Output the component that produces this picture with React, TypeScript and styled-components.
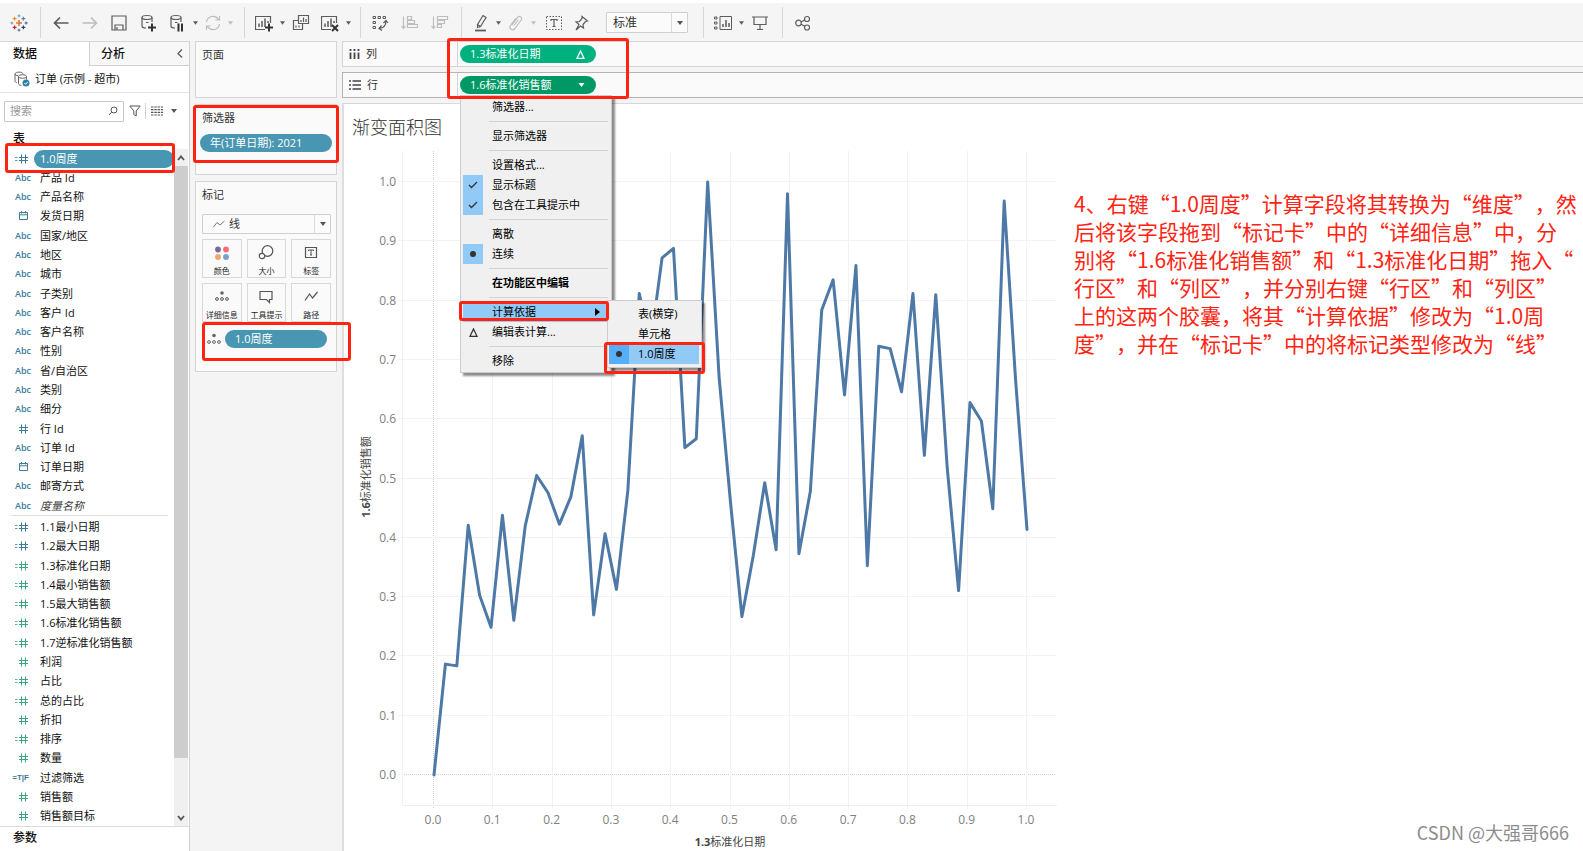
import React from "react";
import styled, { createGlobalStyle, css } from "styled-components";

const SANS = `"Open Sans", "Noto Sans CJK SC", sans-serif`;
const CJK = `"Noto Sans CJK SC", sans-serif`;
const BLUE = "#4996b2";
const DIM = "#3b7c9c";
const MEASURE = "#3ba57c";
const RED = "#ff2412";

const Global = createGlobalStyle`
  *, *::before, *::after { box-sizing: border-box; }
  body { margin: 0; background: #fff; font-family: ${SANS}; font-size: 11px; line-height: 16px; color: #333; }
  button, input, select { font: inherit; color: inherit; margin: 0; padding: 0; }
  button { background: none; border: 0; }
  ul { list-style: none; margin: 0; padding: 0; }
  h1, h2, p { margin: 0; font-size: inherit; font-weight: inherit; }
`;

const Page = styled.div`
  display: flex;
  flex-direction: column;
  min-height: 100vh;
  padding-top: 3px;
`;

/* ---------- toolbar ---------- */

const Toolbar = styled.header`
  display: flex;
  height: 38px;
  padding: 4px 0 3px;
  background: #f5f5f5;
`;

const ToolGroup = styled.div<{ $pad?: number; $width?: number }>`
  display: flex;
  align-items: center;
  flex: none;
  width: ${(p) => (p.$width ? `${p.$width}px` : "auto")};
  padding-left: ${(p) => p.$pad ?? 4}px;
  & + & { border-left: 1px solid #d6d6d6; }
`;

const ToolButton = styled.button<{ $w?: number; $off?: boolean }>`
  display: flex;
  flex: none;
  align-items: center;
  justify-content: center;
  width: ${(p) => p.$w ?? 29}px;
  height: 24px;
  color: ${(p) => (p.$off ? "#bdbdbd" : "#5c5c5c")};
`;

const SizeSelect = styled.div`
  position: relative;
  display: flex;
  width: 82px;
  height: 21px;
  margin-left: 15px;
  font-size: 12px;
`;

const Select = styled.select<{ $indent: number }>`
  appearance: none;
  width: 100%;
  padding: 0 18px 0 ${(p) => p.$indent}px;
  border: 1px solid #cfcfcf;
  border-radius: 1px;
  background: #fbfbfb;
`;

const SelectArrow = styled.span`
  position: absolute;
  right: 0;
  top: 0;
  bottom: 0;
  display: flex;
  align-items: center;
  justify-content: center;
  width: 17px;
  border-left: 1px solid #d9d9d9;
  color: #555;
  pointer-events: none;
`;

const Glyph = ({ s = 18, children }: { s?: number; children: React.ReactNode }) => (
  <svg width={s} height={s} viewBox={`0 0 ${s} ${s}`} fill="none" stroke="currentColor" strokeWidth="1.2" aria-hidden="true">
    {children}
  </svg>
);

const Down = ({ w = 5 }: { w?: number }) => (
  <svg width={w} height="4" viewBox="0 0 6 4" aria-hidden="true">
    <path d="M0 0h6L3 4z" fill="currentColor" />
  </svg>
);

const Caret = ({ off, label }: { off?: boolean; label: string }) => (
  <ToolButton $w={8} $off={off} aria-label={label}>
    <Down w={5} />
  </ToolButton>
);

const plus = (x: number, y: number, r: number, color: string, w = 1.2) => (
  <path key={`${x}-${y}`} d={`M${x - r} ${y}h${2 * r}M${x} ${y - r}v${2 * r}`} stroke={color} strokeWidth={w} />
);

const Logo = () => (
  <Glyph>
    {plus(9, 9, 3, "#e8762b", 1.6)}
    {plus(4.6, 4.6, 1.9, "#eb9129")}
    {plus(13.4, 4.6, 1.9, "#59879b")}
    {plus(4.6, 13.4, 1.9, "#c72037")}
    {plus(13.4, 13.4, 1.9, "#1f457e")}
    {plus(9, 1.9, 1.5, "#5b9fb8", 1)}
    {plus(9, 16.1, 1.5, "#5b6591", 1)}
    {plus(1.9, 9, 1.5, "#7199a6", 1)}
    {plus(16.1, 9, 1.5, "#3d5f9a", 1)}
  </Glyph>
);

const Database = () => (
  <>
    <ellipse cx="8" cy="3.5" rx="5" ry="2" />
    <path d="M3 3.500v8.500c0 1.200 1.500 2 4 2M13 3.500v4.500M9.500 8.500H7" />
  </>
);

const ChartBox = () => (
  <>
    <path d="M15.500 9V2.500h-15v13H10" />
    <path d="M4 13V9.500M7 13V7M10 13V4.500M13 9V7" strokeWidth="1.500" />
  </>
);

const Bars = ({ desc }: { desc?: boolean }) => (
  <>
    <path d="M2.500 2.500v12M.5 12l2 2.500 2-2.500" />
    {desc ? (
      <path d="M6.500 2.500h10v3h-10zM6.500 6.500h7v3h-7zM6.500 10.500h4v3h-4z" />
    ) : (
      <path d="M6.500 2.500h4v3h-4zM6.500 6.500h7v3h-7zM6.500 10.500h10v3h-10z" />
    )}
  </>
);

const AppToolbar = () => (
  <Toolbar>
    <ToolGroup $width={40}>
      <ToolButton aria-label="开始"><Logo /></ToolButton>
    </ToolGroup>
    <ToolGroup $width={204} $pad={5}>
      <ToolButton aria-label="撤消">
        <Glyph><path d="M16.500 9H2.500M8 3.500L2.500 9 8 14.500" strokeWidth="1.700" /></Glyph>
      </ToolButton>
      <ToolButton $off aria-label="重做">
        <Glyph><path d="M1.500 9h14M10 3.500L15.500 9 10 14.500" strokeWidth="1.700" /></Glyph>
      </ToolButton>
      <ToolButton aria-label="保存">
        <Glyph><path d="M2 2h14v14H2zM5 16v-5h8v5M7 13v3" /></Glyph>
      </ToolButton>
      <ToolButton aria-label="新建数据源">
        <Glyph><Database /><path d="M9 13.500h8M13 9.500v8" stroke="#333" strokeWidth="2" /></Glyph>
      </ToolButton>
      <ToolButton aria-label="暂停自动更新">
        <Glyph><Database /><path d="M10.500 9.500v8M14 9.500v8" stroke="#333" strokeWidth="2" /></Glyph>
      </ToolButton>
      <Caret label="自动更新选项" />
      <ToolButton $w={27} $off aria-label="运行更新">
        <Glyph>
          <path d="M2.500 8A6.500 6.500 0 0 1 14.500 5.500M15.500 10A6.500 6.500 0 0 1 3.500 12.500M15.500 2v4h-4M2.500 16v-4h4" />
        </Glyph>
      </ToolButton>
      <Caret off label="更新选项" />
    </ToolGroup>
    <ToolGroup $width={116}>
      <ToolButton aria-label="新建工作表">
        <Glyph><ChartBox /><path d="M10 13.500h8M14 9.500v8" stroke="#333" strokeWidth="2" /></Glyph>
      </ToolButton>
      <Caret label="新建选项" />
      <ToolButton aria-label="复制工作表">
        <Glyph>
          <path d="M6.500 1.500h10v8h-10zM9 8V6M11.500 8V3.500M14 8V5M6.500 6.500h-5v9h9v-6M4 13.500v-2M7 13.500v-2" />
        </Glyph>
      </ToolButton>
      <ToolButton aria-label="清除工作表">
        <Glyph><ChartBox /><path d="M11 11l6 6M17 11l-6 6" stroke="#333" strokeWidth="2" /></Glyph>
      </ToolButton>
      <Caret label="清除选项" />
    </ToolGroup>
    <ToolGroup $width={101}>
      <ToolButton $w={30} aria-label="交换行和列">
        <Glyph>
          <path d="M2 2.500h2.500v2H2zM7 2.500h2.500v2H7zM12 2.500h2.500v2H12zM2 7.500h2.500v2H2zM2 12.500h2.500v2H2z" strokeWidth="1" />
          <path d="M15 7c0 5-3 7-7 7.500M12.500 9L15 6.500 17 9M10.500 11.500L8 14.500l3 2" />
        </Glyph>
      </ToolButton>
      <ToolButton $w={30} $off aria-label="升序排序"><Glyph><Bars /></Glyph></ToolButton>
      <ToolButton $w={30} $off aria-label="降序排序"><Glyph><Bars desc /></Glyph></ToolButton>
    </ToolGroup>
    <ToolGroup $width={242} $pad={6}>
      <ToolButton $w={26} aria-label="突出显示">
        <Glyph><path d="M5.500 10.500L11 1.500l3 2L8.500 12.500l-3 1zM5.500 10.500l3 2" /><path d="M3 16.500h11" strokeWidth="1.800" /></Glyph>
      </ToolButton>
      <Caret label="突出显示选项" />
      <ToolButton $w={27} $off aria-label="组成员">
        <Glyph><path d="M5 11l5.500-7.500c2-2.500 5.500 0 3.700 2.500L8 14.500c-2.500 3-6.500 0-4.500-3L9 4M7 11.500l4.500-6" /></Glyph>
      </ToolButton>
      <Caret off label="组选项" />
      <ToolButton $w={34} aria-label="显示标记标签">
        <Glyph>
          <path d="M1.500 2.500h15v13h-15z" strokeDasharray="1.500 1.500" strokeWidth="1" />
          <path d="M6 7V5.500h6V7M9 5.500v7M7.500 12.500h3" />
        </Glyph>
      </ToolButton>
      <ToolButton $w={20} aria-label="固定轴">
        <Glyph><path d="M10 2.500l5.500 4.500-2 .5-2.500 3 .5 3.500-3-2-4.500 4 3-5.500-3-2.500 3.500-.5 2.500-3z" /></Glyph>
      </ToolButton>
      <SizeSelect>
        <Select $indent={6} aria-label="适合" defaultValue="标准">
          <option>标准</option>
        </Select>
        <SelectArrow><Down w={6} /></SelectArrow>
      </SizeSelect>
    </ToolGroup>
    <ToolGroup $width={79}>
      <ToolButton aria-label="智能显示">
        <Glyph>
          <path d="M.5 3h2.500v2H.5zM.5 8h2.500v2H.5zM.5 13h2.500v2H.5zM6 2.500h11.500v13H6z" strokeWidth="1" />
          <path d="M9 13v-3M12 13V6M15 13V9" strokeWidth="1.500" />
        </Glyph>
      </ToolButton>
      <Caret label="智能显示选项" />
      <ToolButton aria-label="演示模式">
        <Glyph><path d="M1 3h16M3 3v7.500h12V3M9 10.500V15M6 15.500h6" /></Glyph>
      </ToolButton>
    </ToolGroup>
    <ToolGroup $pad={5}>
      <ToolButton aria-label="共享">
        <Glyph>
          <circle cx="4.500" cy="9" r="2.800" /><circle cx="13" cy="5" r="2.500" /><circle cx="13" cy="13.500" r="2.500" />
          <path d="M7 8L10.700 6M7 10.300l3.800 2" />
        </Glyph>
      </ToolButton>
    </ToolGroup>
  </Toolbar>
);

/* ---------- shared parts ---------- */

const Body = styled.div`
  display: flex;
  flex: 1;
  background: #f4f4f4;
`;

/** Red hand-drawn frame laid over the thing it points at. */
const Callout = styled.span<{ $inset: string }>`
  position: absolute;
  inset: ${(p) => p.$inset};
  border: 3px solid ${RED};
  border-radius: 3px;
  pointer-events: none;
  z-index: 5;
`;

const Pill = styled.button<{ $color?: string; $pad?: number }>`
  display: flex;
  align-items: center;
  justify-content: space-between;
  flex: 1;
  height: 18px;
  padding: 0 11px 0 ${(p) => p.$pad ?? 10}px;
  border-radius: 9px;
  background: ${(p) => p.$color ?? BLUE};
  color: #fff;
  text-align: left;
`;

/* ---------- data pane ---------- */

const DataPane = styled.aside`
  display: flex;
  flex-direction: column;
  flex: none;
  width: 190px;
  border-right: 1px solid #d0d0d0;
  background: #fff;
  color: #111;
`;

const Tabs = styled.div`
  display: flex;
  height: 25px;
`;

const Tab = styled.button<{ $active?: boolean }>`
  display: flex;
  align-items: center;
  justify-content: space-between;
  width: ${(p) => (p.$active ? "89px" : "auto")};
  flex: ${(p) => (p.$active ? "none" : 1)};
  padding: 0 6px 0 ${(p) => (p.$active ? 13 : 11)}px;
  font-size: 12px;
  font-weight: 500;
  border-top: 1px solid #d6d6d6;
  ${(p) =>
    !p.$active &&
    css`
      background: #f7f7f7;
      border-left: 1px solid #d0d0d0;
      border-bottom: 1px solid #d0d0d0;
    `}
`;

const Source = styled.div`
  display: flex;
  align-items: center;
  gap: 5px;
  height: 27px;
  padding-left: 14px;
  border-bottom: 1px solid #e4e4e4;
`;

const SearchRow = styled.div`
  display: flex;
  align-items: center;
  height: 36px;
  padding-left: 4px;
  color: #555;
`;

const SearchBox = styled.label`
  display: flex;
  align-items: center;
  width: 120px;
  height: 21px;
  padding: 0 5px;
  border: 1px solid #c8c8c8;
  border-radius: 1px;
  input {
    flex: 1;
    min-width: 0;
    border: 0;
    outline: 0;
    background: none;
  }
  input::placeholder { color: #999; opacity: 1; }
`;

const IconButton = styled.button<{ $w: number; $line?: boolean }>`
  display: flex;
  align-items: center;
  justify-content: center;
  width: ${(p) => p.$w}px;
  height: 16px;
  border-right: ${(p) => (p.$line ? "1px solid #d0d0d0" : "0")};
`;

const TableTitle = styled.h2`
  height: 20px;
  padding: 2px 0 0 13px;
  font-size: 12px;
  font-weight: 500;
`;

const FieldArea = styled.div`
  display: flex;
  flex: 1;
`;

const FieldList = styled.ul`
  display: flex;
  flex-direction: column;
  flex: 1;
`;

const Field = styled.li<{ $italic?: boolean; $rule?: boolean }>`
  position: relative;
  display: flex;
  align-items: center;
  flex: 1 0 16px;
  font-style: ${(p) => (p.$italic ? "italic" : "normal")};
  ${(p) => p.$italic && "color: #444;"}
  ${(p) =>
    p.$rule &&
    css`
      margin-bottom: 2px;
      &::after {
        content: "";
        position: absolute;
        left: 11px;
        right: 6px;
        bottom: -1px;
        border-top: 1px solid #ddd;
      }
    `}
`;

const TypeMark = styled.span<{ $color: string; $kind: Kind; $tight?: boolean }>`
  display: flex;
  align-items: center;
  justify-content: flex-end;
  flex: none;
  width: 31px;
  padding-right: ${(p) => (p.$kind === "bool" ? 2 : 0)}px;
  margin-right: ${(p) => (p.$tight ? 3 : 9)}px;
  font-family: ${(p) => (p.$kind === "bool" ? `"Liberation Sans", sans-serif` : "inherit")};
  font-size: ${(p) => (p.$kind === "bool" ? 8 : 9)}px;
  font-style: normal;
  font-weight: 600;
  color: ${(p) => p.$color};
`;

const ScrollBar = styled.div`
  display: flex;
  flex-direction: column;
  align-items: center;
  width: 14px;
  margin-right: 1px;
  background: #f0f0f0;
  color: #555;
`;

const ScrollStep = styled.button`
  display: flex;
  align-items: center;
  justify-content: center;
  width: 14px;
  height: 17px;
`;

const ScrollThumb = styled.div`
  width: 14px;
  flex: 592;
  background: #cdcdcd;
`;

const ScrollRest = styled.div`
  flex: 51;
`;

const Params = styled.div`
  height: 25px;
  padding: 3px 0 0 13px;
  border-top: 1px solid #dcdcdc;
  font-size: 12px;
  font-weight: 500;
`;

type Kind = "abc" | "date" | "num" | "calc" | "bool";
type FieldDef = { name: string; kind: Kind; color?: string; italic?: boolean; rule?: boolean; pill?: boolean };

const fields: FieldDef[] = [
  { name: "1.0周度", kind: "calc", pill: true },
  { name: "产品 Id", kind: "abc" },
  { name: "产品名称", kind: "abc" },
  { name: "发货日期", kind: "date" },
  { name: "国家/地区", kind: "abc" },
  { name: "地区", kind: "abc" },
  { name: "城市", kind: "abc" },
  { name: "子类别", kind: "abc" },
  { name: "客户 Id", kind: "abc" },
  { name: "客户名称", kind: "abc" },
  { name: "性别", kind: "abc" },
  { name: "省/自治区", kind: "abc" },
  { name: "类别", kind: "abc" },
  { name: "细分", kind: "abc" },
  { name: "行 Id", kind: "num" },
  { name: "订单 Id", kind: "abc" },
  { name: "订单日期", kind: "date" },
  { name: "邮寄方式", kind: "abc" },
  { name: "度量名称", kind: "abc", italic: true, rule: true },
  { name: "1.1最小日期", kind: "calc" },
  { name: "1.2最大日期", kind: "calc" },
  { name: "1.3标准化日期", kind: "calc", color: MEASURE },
  { name: "1.4最小销售额", kind: "calc", color: MEASURE },
  { name: "1.5最大销售额", kind: "calc", color: MEASURE },
  { name: "1.6标准化销售额", kind: "calc", color: MEASURE },
  { name: "1.7逆标准化销售额", kind: "calc", color: MEASURE },
  { name: "利润", kind: "num", color: MEASURE },
  { name: "占比", kind: "calc", color: MEASURE },
  { name: "总的占比", kind: "calc", color: MEASURE },
  { name: "折扣", kind: "num", color: MEASURE },
  { name: "排序", kind: "calc", color: MEASURE },
  { name: "数量", kind: "num", color: MEASURE },
  { name: "过滤筛选", kind: "bool" },
  { name: "销售额", kind: "num", color: MEASURE },
  { name: "销售额目标", kind: "num", color: MEASURE },
];

const TypeIcon = ({ kind }: { kind: Kind }) => {
  if (kind === "abc") return <>Abc</>;
  if (kind === "bool") return <>=T|F</>;
  return (
    <svg width="16" height="12" viewBox="0 0 16 12" fill="none" stroke="currentColor" aria-hidden="true">
      {kind === "date" ? (
        <path d="M4.500 2.500h8v7h-8zM4.500 4.800h8M6.500 1v2.500M10.500 1v2.500" />
      ) : (
        <path d="M4 4.500h9M4 7.500h9M6.500 1.500v9M10.500 1.500v9" />
      )}
      {kind === "calc" && <path d="M0 4.500h2.500M0 7.500h2.500" strokeOpacity=".8" />}
    </svg>
  );
};

const Chevron = ({ down }: { down?: boolean }) => (
  <svg width="8" height="6" viewBox="0 0 8 6" fill="none" stroke="currentColor" strokeWidth="1.800" aria-hidden="true">
    <path d={down ? "M1 1l3 3.500L7 1" : "M1 5l3-3.500L7 5"} />
  </svg>
);

const Sidebar = () => (
  <DataPane>
    <Tabs>
      <Tab $active>数据</Tab>
      <Tab>
        分析
        <svg width="6" height="9" viewBox="0 0 6 9" fill="none" stroke="#555" strokeWidth="1.200" aria-hidden="true">
          <path d="M5 .5L1 4.500l4 4" />
        </svg>
      </Tab>
    </Tabs>
    <Source>
      <svg width="16" height="16" viewBox="0 0 16 16" fill="none" stroke="#666" aria-hidden="true">
        <path d="M1 3c0-2.500 8-2.500 8 0M1 3v7c0 1 1 1.500 2 1.700M1 3c0 1 1.500 1.700 3 1.700" />
        <ellipse cx="8.500" cy="5.500" rx="4" ry="1.800" />
        <path d="M4.500 5.500v7c0 1 1.500 1.800 3 2M12.500 5.500v3" />
        <circle cx="12" cy="12" r="3.500" fill="#2f7fa5" stroke="none" />
        <path d="M10.300 12l1.300 1.300 2.200-2.500" stroke="#fff" />
      </svg>
      订单 (示例 - 超市)
    </Source>
    <SearchRow>
      <SearchBox>
        <input placeholder="搜索" aria-label="搜索" />
        <svg width="10" height="10" viewBox="0 0 10 10" fill="none" stroke="#555" aria-hidden="true">
          <circle cx="6" cy="4" r="3" /><path d="M3.800 6.200L1 9" />
        </svg>
      </SearchBox>
      <IconButton $w={22} $line aria-label="筛选字段">
        <svg width="12" height="12" viewBox="0 0 12 12" fill="none" stroke="currentColor" aria-hidden="true">
          <path d="M.8 1h10.400L7.200 6v5L4.800 9.500V6z" />
        </svg>
      </IconButton>
      <IconButton $w={22} aria-label="查看方式">
        <svg width="12" height="10" viewBox="0 0 12 10" stroke="currentColor" strokeWidth="1.200" aria-hidden="true">
          <path d="M0 1h12M0 3.700h12M0 6.400h12M0 9h12" strokeDasharray="2.500 .8" />
        </svg>
      </IconButton>
      <IconButton $w={12} aria-label="查看选项"><Down w={6} /></IconButton>
    </SearchRow>
    <TableTitle>表</TableTitle>
    <FieldArea>
      <FieldList>
        {fields.map((f) => (
          <Field key={f.name} $italic={f.italic} $rule={f.rule}>
            <TypeMark $color={f.color ?? DIM} $kind={f.kind} $tight={f.pill}><TypeIcon kind={f.kind} /></TypeMark>
            {f.pill ? <Pill $pad={6}>{f.name}</Pill> : f.name}
            {f.pill && <Callout $inset="-6px -1px -5px 5px" />}
          </Field>
        ))}
      </FieldList>
      <ScrollBar>
        <ScrollStep aria-label="向上滚动"><Chevron /></ScrollStep>
        <ScrollThumb />
        <ScrollRest />
        <ScrollStep aria-label="向下滚动"><Chevron down /></ScrollStep>
      </ScrollBar>
    </FieldArea>
    <Params>参数</Params>
  </DataPane>
);

/* ---------- cards ---------- */

const CardColumn = styled.div`
  display: flex;
  flex-direction: column;
  flex: none;
  gap: 6px;
  width: 152px;
  padding: 0 5px;
`;

const Card = styled.section<{ $height: number }>`
  position: relative;
  min-height: ${(p) => p.$height}px;
  padding: 5px 5px 0;
  border: 1px solid #d4d4d4;
  background: #fafafa;
`;

const CardTitle = styled.h2`
  height: 22px;
  padding-left: 1px;
`;

const MarkType = styled.div`
  position: relative;
  display: flex;
  height: 20px;
  margin: 5px 0 5px 1px;
  svg.line { position: absolute; left: 11px; top: 5px; }
`;

const MarkGrid = styled.div`
  display: grid;
  grid-template-columns: repeat(3, 1fr);
  gap: 5px;
  padding-left: 1px;
`;

const MarkButton = styled.button`
  display: flex;
  flex-direction: column;
  align-items: center;
  justify-content: space-between;
  height: 39px;
  padding: 4px 0 0;
  border: 1px solid #d8d8d8;
  font-size: 8px;
  line-height: 12px;
  white-space: nowrap;
  color: #222;
  svg { color: #555; }
`;

const MarkPillRow = styled.div`
  position: relative;
  display: flex;
  align-items: center;
  gap: 4px;
  padding: 8px 4px 0 6px;
`;

const PillRow = styled.div`
  display: flex;
  padding-top: 2px;
  margin: 0 -1px;
`;

const Detail = () => (
  <svg width="14" height="12" viewBox="0 0 14 12" fill="none" stroke="#666" aria-hidden="true">
    <circle cx="7" cy="2.500" r="1.800" fill="#666" stroke="none" />
    <circle cx="2" cy="9" r="1.400" /><circle cx="7" cy="9" r="1.400" /><circle cx="12" cy="9" r="1.400" />
  </svg>
);

const Zig = () => (
  <svg className="line" width="12" height="10" viewBox="0 0 12 10" fill="none" stroke="#777" aria-hidden="true">
    <path d="M.5 8L4 3.500l3 2.500L11.500 2" />
  </svg>
);

const marks: { label: string; icon: React.ReactNode }[] = [
  {
    label: "颜色",
    icon: (
      <svg width="14" height="18" viewBox="0 0 14 18" aria-hidden="true">
        <circle cx="3" cy="5.500" r="2.900" fill="#7a6a9c" /><circle cx="11" cy="5.500" r="2.900" fill="#f26b7a" />
        <circle cx="3" cy="13" r="2.900" fill="#f2a36f" /><circle cx="11" cy="13" r="2.900" fill="#7a9fcc" />
      </svg>
    ),
  },
  {
    label: "大小",
    icon: <Glyph s={16}><circle cx="9.500" cy="7" r="5.300" /><circle cx="4" cy="12" r="2.700" fill="#fafafa" /></Glyph>,
  },
  {
    label: "标签",
    icon: <Glyph s={16}><path d="M2.500 3.500h11v10h-11z" /><path d="M5.500 7V6h5v1M8 6v5M7 11h2" strokeWidth="1" /></Glyph>,
  },
  {
    label: "详细信息",
    icon: (
      <Glyph s={16}>
        <circle cx="8" cy="5" r="1.800" fill="#666" stroke="none" />
        <path d="M1.600 11a1.400 1.400 0 1 0 2.800 0a1.400 1.400 0 1 0-2.800 0M6.600 11a1.400 1.400 0 1 0 2.800 0a1.400 1.400 0 1 0-2.800 0M11.600 11a1.400 1.400 0 1 0 2.800 0a1.400 1.400 0 1 0-2.800 0" strokeWidth="1" />
      </Glyph>
    ),
  },
  { label: "工具提示", icon: <Glyph s={16}><path d="M2 3.500h12v8h-2.500v3l-3-3H2z" /></Glyph> },
  { label: "路径", icon: <Glyph s={16}><path d="M2 12.500L6.500 6l3 4L14.500 4" /></Glyph> },
];

const Cards = () => (
  <CardColumn>
    <Card $height={57}><CardTitle>页面</CardTitle></Card>
    <Card $height={71}>
      <CardTitle>筛选器</CardTitle>
      <PillRow><Pill>年(订单日期): 2021</Pill></PillRow>
      <Callout $inset="0 -3px 11px -3px" />
    </Card>
    <Card $height={191}>
      <CardTitle>标记</CardTitle>
      <MarkType>
        <Select $indent={26} aria-label="标记类型" defaultValue="线"><option>线</option></Select>
        <Zig />
        <SelectArrow><Down w={6} /></SelectArrow>
      </MarkType>
      <MarkGrid>
        {marks.map((m) => (
          <MarkButton key={m.label}>{m.icon}{m.label}</MarkButton>
        ))}
      </MarkGrid>
      <MarkPillRow>
        <Detail />
        <Pill>1.0周度</Pill>
        <Callout $inset="0 -20px -13px 1px" />
      </MarkPillRow>
    </Card>
  </CardColumn>
);

/* ---------- shelves and menus ---------- */

const Main = styled.main`
  display: flex;
  flex-direction: column;
  flex: 1;
  min-width: 0;
`;

const Shelf = styled.div<{ $focus?: boolean }>`
  display: flex;
  height: 26px;
  margin-bottom: 5px;
  border: 1px solid ${(p) => (p.$focus ? "#b4b4b4" : "#d4d4d4")};
  border-right: 0;
  background: #fafafa;
`;

const ShelfLabel = styled.div`
  display: flex;
  align-items: center;
  gap: 6px;
  flex: none;
  width: 115px;
  padding-left: 6px;
  border-right: 1px solid #d4d4d4;
`;

const ShelfBody = styled.div`
  position: relative;
  display: flex;
  align-items: center;
  width: 138px;
  padding-left: 2px;
`;

const Menu = styled.ul<{ $width: number }>`
  width: ${(p) => p.$width}px;
  padding: 1px 2px;
  border: 1px solid #ccc;
  background: #f0f0f0;
  box-shadow: 3px 3px 2px rgba(0, 0, 0, 0.45);
  color: #000;
`;

const ContextMenu = styled(Menu)`
  position: absolute;
  left: 2px;
  top: 22px;
  z-index: 3;
`;

const SubMenu = styled(Menu)`
  position: absolute;
  left: 144px;
  top: -2px;
  padding: 3px 2px 3px 1px;
  z-index: 4;
`;

const Item = styled.li`
  position: relative;
`;

const ItemButton = styled.button<{ $on?: boolean; $strong?: boolean }>`
  display: flex;
  align-items: center;
  width: 100%;
  height: 20px;
  padding-right: 9px;
  background: ${(p) => (p.$on ? "#91c9f7" : "none")};
  font-weight: ${(p) => (p.$strong ? 700 : 400)};
  text-align: left;
`;

const ItemMark = styled.span<{ $bg?: string }>`
  display: flex;
  align-items: center;
  justify-content: center;
  flex: none;
  width: 20px;
  height: 20px;
  margin-right: 9px;
  background: ${(p) => p.$bg ?? "none"};
`;

const ItemText = styled.span`
  flex: 1;
`;

const Separator = styled.li`
  height: 9px;
  margin: 0 1px 0 26px;
  padding-top: 4px;
  &::before { content: ""; display: block; border-top: 1px solid #d2d2d2; }
`;

const Check = () => (
  <svg width="10" height="8" viewBox="0 0 10 8" fill="none" stroke="#333" strokeWidth="1.300" aria-hidden="true"><path d="M1 4l2.500 2.500L9 1" /></svg>
);
const Dot = () => (
  <svg width="6" height="6" viewBox="0 0 6 6" aria-hidden="true"><circle cx="3" cy="3" r="3" fill="#333" /></svg>
);
const Delta = ({ color = "#333" }: { color?: string }) => (
  <svg width="9" height="9" viewBox="0 0 9 9" fill="none" stroke={color} strokeWidth="1.300" aria-hidden="true"><path d="M4.500 1L8 8.300H1z" /></svg>
);

type MenuEntry = { text: string; mark?: React.ReactNode; bg?: string; strong?: boolean; sub?: boolean } | "-";

const menu: MenuEntry[] = [
  { text: "筛选器..." },
  "-",
  { text: "显示筛选器" },
  "-",
  { text: "设置格式..." },
  { text: "显示标题", mark: <Check />, bg: "#91c9f7" },
  { text: "包含在工具提示中", mark: <Check />, bg: "#91c9f7" },
  "-",
  { text: "离散" },
  { text: "连续", mark: <Dot />, bg: "#91c9f7" },
  "-",
  { text: "在功能区中编辑", strong: true },
  "-",
  { text: "计算依据", sub: true },
  { text: "编辑表计算...", mark: <Delta /> },
  "-",
  { text: "移除" },
];

const PillMenu = () => (
  <ContextMenu $width={152}>
    {menu.map((e, i) =>
      e === "-" ? (
        <Separator key={i} />
      ) : (
        <Item key={e.text}>
          <ItemButton $on={e.sub} $strong={e.strong}>
            <ItemMark $bg={e.bg}>{e.mark}</ItemMark>
            <ItemText>{e.text}</ItemText>
            {e.sub && <svg width="5" height="8" viewBox="0 0 5 8" aria-hidden="true"><path d="M0 0l5 4-5 4z" /></svg>}
          </ItemButton>
          {e.sub && (
            <>
              <SubMenu $width={95}>
                <Item><ItemButton><ItemMark /><ItemText>表(横穿)</ItemText></ItemButton></Item>
                <Item><ItemButton><ItemMark /><ItemText>单元格</ItemText></ItemButton></Item>
                <Item>
                  <ItemButton $on><ItemMark $bg="#56aef8"><Dot /></ItemMark><ItemText>1.0周度</ItemText></ItemButton>
                  <Callout $inset="-2px -6px -10px -5px" />
                </Item>
              </SubMenu>
              <Callout $inset="-1px 0 1px -4px" />
            </>
          )}
        </Item>
      )
    )}
  </ContextMenu>
);

/* ---------- view ---------- */

const View = styled.div`
  position: relative;
  display: flex;
  flex: 1;
  border-top: 1px solid #d8d8d8;
  border-left: 2px solid #dedede;
  background: #fff;
`;

const ChartColumn = styled.section`
  flex: 0 1 720px;
  min-width: 0;
`;

const ChartTitle = styled.h1`
  height: 44px;
  padding: 10px 0 0 8px;
  font-family: ${CJK};
  font-size: 18px;
  font-weight: 300;
  line-height: 24px;
  color: #333;
`;

const ChartSvg = styled.svg`
  display: block;
  width: 100%;
  height: auto;
  font-family: ${SANS};
  font-size: 12px;
  fill: #808080;
`;

const Note = styled.p`
  flex: 1 0 auto;
  padding: 85px 0 0 10px;
  font-family: ${CJK};
  font-size: 21px;
  line-height: 28px;
  color: ${RED};
  white-space: nowrap;
  text-spacing-trim: space-all;
  span { display: block; }
`;

const Watermark = styled.div`
  position: absolute;
  right: 14px;
  bottom: 6px;
  font-family: ${CJK};
  font-size: 18px;
  line-height: 26px;
  color: #8c8c8c;
`;

const values = [
  0, 0.187, 0.184, 0.421, 0.303, 0.249, 0.438, 0.261, 0.42, 0.505, 0.476, 0.423, 0.469, 0.572, 0.27, 0.407, 0.313,
  0.48, 0.812, 0.728, 0.872, 0.888, 0.552, 0.567, 1, 0.671, 0.46, 0.267, 0.37, 0.493, 0.38, 0.98, 0.373, 0.478, 0.784,
  0.835, 0.641, 0.859, 0.353, 0.723, 0.719, 0.646, 0.812, 0.539, 0.81, 0.519, 0.311, 0.628, 0.597, 0.449, 0.968, 0.666,
  0.414,
];

const SCALE = 593;
const px = (v: number) => 90 + v * SCALE;
const py = (v: number) => 627 - v * SCALE;
const ticks = Array.from({ length: 11 }, (_, i) => i / 10);

const Chart = () => (
  <ChartSvg viewBox="0 0 720 702" role="img" aria-label="1.6标准化销售额 / 1.3标准化日期">
    {ticks.map((t) => (
      <g key={t}>
        <path d={`M${Math.round(px(t)) - 0.5} 3V661`} stroke={t ? "#f2f2f2" : "#cfcfcf"} strokeDasharray={t ? undefined : "1 1"} />
        <path d={`M${t ? 54 : 60} ${Math.round(py(t)) - 0.5}H712`} stroke={t ? "#f2f2f2" : "#cfcfcf"} strokeDasharray={t ? undefined : "1 1"} />
        <text x={px(t) - 1} y="676" textAnchor="middle">{t.toFixed(1)}</text>
        <text x="52" y={py(t) + 4} textAnchor="end">{t.toFixed(1)}</text>
      </g>
    ))}
    <path d="M58.500 3V657.500H713" fill="none" stroke="#efefef" />
    <polyline
      points={values.map((v, i) => `${px(i / 52)},${py(v)}`).join(" ")}
      fill="none"
      stroke="#4e79a7"
      strokeWidth="3"
      strokeLinejoin="round"
      strokeLinecap="round"
    />
    <text x="386" y="698" textAnchor="middle" fontSize="11" fill="#444">
      <tspan fontWeight="700">1.3</tspan>标准化日期
    </text>
    <text transform="translate(26 329) rotate(-90)" textAnchor="middle" fontSize="11" fill="#444">
      <tspan fontWeight="700">1.6</tspan>标准化销售额
    </text>
  </ChartSvg>
);

const noteLines = [
  "4、右键“1.0周度”计算字段将其转换为“维度”，然",
  "后将该字段拖到“标记卡”中的“详细信息”中，分",
  "别将“1.6标准化销售额”和“1.3标准化日期”拖入“",
  "行区”和“列区”，并分别右键“行区”和“列区”",
  "上的这两个胶囊，将其“计算依据”修改为“1.0周",
  "度”，并在“标记卡”中的将标记类型修改为“线”",
];

export default function App() {
  return (
    <Page lang="zh-CN">
      <Global />
      <AppToolbar />
      <Body>
        <Sidebar />
        <Cards />
        <Main>
          <Shelf>
            <ShelfLabel>
              <svg width="11" height="12" viewBox="0 0 11 12" stroke="#444" strokeWidth="1.800" aria-hidden="true">
                <path d="M1.500 1v2M5.500 1v2M9.500 1v2M1.500 4.500V11M5.500 4.500V11M9.500 4.500V11" />
              </svg>
              列
            </ShelfLabel>
            <ShelfBody>
              <Pill $color="#00b180">1.3标准化日期<Delta color="#fff" /></Pill>
              <Callout $inset="-4px -33px -33px -11px" />
            </ShelfBody>
          </Shelf>
          <Shelf $focus>
            <ShelfLabel>
              <svg width="12" height="10" viewBox="0 0 12 10" stroke="#444" strokeWidth="1.600" aria-hidden="true">
                <path d="M0 1h2M0 5h2M0 9h2M3.500 1H12M3.500 5H12M3.500 9H12" />
              </svg>
              行
            </ShelfLabel>
            <ShelfBody>
              <Pill $color="#009966">1.6标准化销售额<Down w={7} /></Pill>
              <PillMenu />
            </ShelfBody>
          </Shelf>
          <View>
            <ChartColumn>
              <ChartTitle>渐变面积图</ChartTitle>
              <Chart />
            </ChartColumn>
            <Note>
              {noteLines.map((l) => (
                <span key={l}>{l}</span>
              ))}
            </Note>
            <Watermark>CSDN @大强哥666</Watermark>
          </View>
        </Main>
      </Body>
    </Page>
  );
}
